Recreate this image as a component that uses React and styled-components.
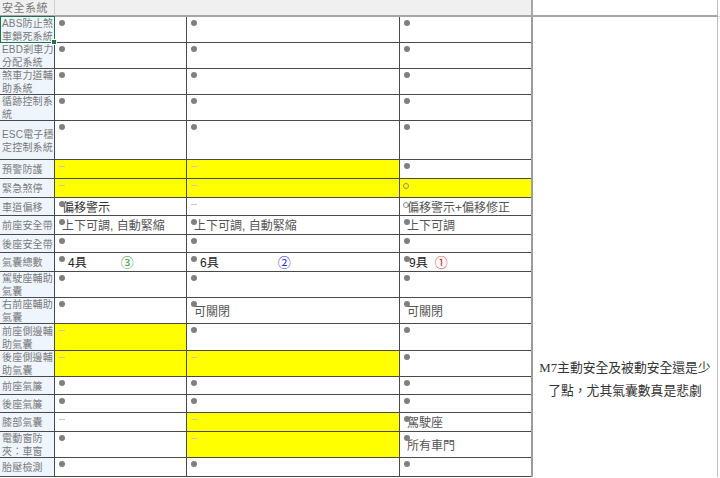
import React from "react";
import styled, { createGlobalStyle, css } from "styled-components";

const GlobalStyle = createGlobalStyle`
  html, body {
    margin: 0;
    padding: 0;
    background: #fff;
    overflow: hidden;
  }
  body {
    font-family: "Liberation Sans", "Noto Sans CJK TC", sans-serif;
  }
`;

const LINE = "#4a4a4a";
const HEAD_LINE = "#a6a6a6";

const dot = (t, o = {}) => ({ m: "dot", t, ...o });
const dash = (y) => ({ m: "dash", y });
const ring = (t, o = {}) => ({ m: "ring", t, ...o });

// 20 body rows, heights from the sheet
const rows = [
  { label: "ABS防止煞\n車鎖死系統", h: 26, selected: true, cells: [dot(), dot(), dot()] },
  { label: "EBD剎車力\n分配系統", h: 26, cells: [dot(), dot(), dot()] },
  { label: "煞車力道輔\n助系統", h: 26, cells: [dot(), dot(), dot()] },
  { label: "循跡控制系\n統", h: 26, cells: [dot(), dot(), dot()] },
  { label: "ESC電子穩\n定控制系統", h: 39, cells: [dot(), dot(), dot()] },
  { label: "預警防護", h: 19, cells: [dash(true), dash(true), dot()] },
  { label: "緊急煞停", h: 19, cells: [dash(true), dash(true), { ...ring(), y: true }] },
  {
    label: "車道偏移",
    h: 18,
    cells: [dot("偏移警示", { color: "#333" }), dash(false), ring("偏移警示+偏移修正")],
  },
  {
    label: "前座安全帶",
    h: 19,
    cells: [dot("上下可調, 自動緊縮"), dot("上下可調, 自動緊縮"), dot("上下可調")],
  },
  { label: "後座安全帶", h: 18, cells: [dot(), dot(), dot()] },
  {
    label: "氣囊總數",
    h: 19,
    cells: [
      dot("4具", { color: "#222", indent: 13, mark: "③", markColor: "#2f9a2f", gap: 34 }),
      dot("6具", { color: "#222", indent: 13, mark: "②", markColor: "#2424f0", gap: 59 }),
      dot("9具", { color: "#222", indent: 9, mark: "①", markColor: "#e02424", gap: 7 }),
    ],
  },
  { label: "駕駛座輔助\n氣囊", h: 26, cells: [dot(), dot(), dot()] },
  { label: "右前座輔助\n氣囊", h: 26, cells: [dot(), dot("可關閉"), dot("可關閉")] },
  { label: "前座側邊輔\n助氣囊", h: 27, cells: [dash(true), dot(), dot()] },
  { label: "後座側邊輔\n助氣囊", h: 26, cells: [dash(true), dash(true), dot()] },
  { label: "前座氣簾", h: 18, cells: [dot(), dot(), dot()] },
  { label: "後座氣簾", h: 18, cells: [dot(), dot(), dot()] },
  { label: "膝部氣囊", h: 19, cells: [dash(false), dash(true), dot("駕駛座")] },
  { label: "電動窗防\n夾：車窗", h: 26, cells: [dot(), dash(true), dot("所有車門")] },
  { label: "胎壓檢測", h: 19, cells: [dot(), dot(), dot()] },
];

const Sheet = styled.div`
  display: grid;
  grid-template-columns: 55px 132px 213px 131px 187px 1fr;
  grid-template-rows: 17px ${rows.map((r) => r.h + "px").join(" ")};
  width: 720px;
  box-sizing: border-box;
`;

const HeadLabel = styled.div`
  background: #f0f0f0;
  border-right: 1px solid #d0d0d0;
  border-bottom: 2px solid ${HEAD_LINE};
  color: #777;
  font-family: "Noto Sans CJK TC", sans-serif;
  font-size: 11px;
  letter-spacing: 0.5px;
  line-height: 15px;
  padding-left: 2px;
`;

const HeadBlank = styled.div`
  grid-column: 2 / 5;
  background: #f0f0f0;
  border-bottom: 2px solid ${HEAD_LINE};
`;

const HeadNote = styled.div`
  background: #fff;
  border-left: 2px solid ${HEAD_LINE};
  border-right: 1px solid #bdbdbd;
  border-bottom: 2px solid ${HEAD_LINE};
`;

const HeadRest = styled.div`
  border-bottom: 1px solid #e2e2e2;
`;

const Notes = styled.div`
  grid-column: 5;
  grid-row: 2 / span ${rows.length};
  border-left: 2px solid #9c9c9c;
  border-right: 1px solid #bdbdbd;
  padding-top: 340px;
  text-align: center;
  white-space: pre;
  color: #333;
  font-family: "Liberation Serif", "Noto Sans CJK TC", serif;
  font-size: 12.8px;
  line-height: 23px;
`;

const Rest = styled.div`
  grid-column: 6;
  grid-row: 2 / span ${rows.length};
`;

const Label = styled.div`
  position: relative;
  background: #eff5fc;
  border-right: 1px solid ${LINE};
  border-bottom: 1px solid ${LINE};
  color: #7a7a7a;
  font-family: "Liberation Sans", "Noto Sans CJK TC", sans-serif;
  font-size: 10px;
  letter-spacing: 0.2px;
  line-height: 13px;
  white-space: pre;
  padding: 1px 0 0 2px;
  display: flex;
  align-items: center;
  overflow: visible;

  ${(p) =>
    p.$selected &&
    css`
      z-index: 2;
      &::before {
        content: "";
        position: absolute;
        left: 0;
        top: -1px;
        right: -1px;
        bottom: -1px;
        border: 1px solid #217346;
      }
      &::after {
        content: "";
        position: absolute;
        right: -3px;
        bottom: -3px;
        width: 4px;
        height: 4px;
        background: #217346;
        border: 1px solid #fff;
      }
    `}
`;

const Cell = styled.div`
  position: relative;
  background: ${(p) => (p.$yellow ? "#ffff00" : "#fff")};
  border-right: ${(p) => (p.$last ? "none" : `1px solid ${LINE}`)};
  border-bottom: 1px solid ${LINE};
  display: flex;
  align-items: center;
  padding: 2px 0 0 ${(p) => p.$indent}px;
  color: ${(p) => p.$color};
  font-family: "Liberation Sans", "Noto Sans CJK TC", sans-serif;
  font-size: 12px;
  line-height: 16px;
  white-space: nowrap;
  overflow: hidden;
`;

const Dot = styled.span`
  position: absolute;
  left: 4px;
  top: 3px;
  width: 6px;
  height: 6px;
  border-radius: 50%;
  background: #7f7f7f;
`;

const Dash = styled.span`
  position: absolute;
  left: 4px;
  top: 6px;
  width: 6px;
  height: 1px;
  background: #c6c6c6;
`;

const Ring = styled.span`
  position: absolute;
  left: 3px;
  top: 4px;
  width: 6px;
  height: 6px;
  box-sizing: border-box;
  border-radius: 50%;
  border: 1px solid #8c8c8c;
`;

const Circled = styled.span`
  margin-left: ${(p) => p.$gap}px;
  color: ${(p) => p.$color};
  font-family: "DejaVu Serif", "Noto Sans CJK TC", serif;
  font-size: 13px;
`;

const Marker = ({ m }) => {
  if (m === "dot") return <Dot />;
  if (m === "ring") return <Ring />;
  return <Dash />;
};

const DataCell = ({ c, last }) => (
  <Cell $yellow={c.y} $last={last} $indent={c.indent ?? 7} $color={c.color || "#555"}>
    <Marker m={c.m} />
    {c.t && <span>{c.t}</span>}
    {c.mark && (
      <Circled $gap={c.gap} $color={c.markColor}>
        {c.mark}
      </Circled>
    )}
  </Cell>
);

export default function App() {
  return (
    <>
      <GlobalStyle />
      <Sheet>
        <HeadLabel>安全系統</HeadLabel>
        <HeadBlank />
        <HeadNote />
        <HeadRest />
        <Notes>{"M7主動安全及被動安全還是少\n了點，尤其氣囊數真是悲劇"}</Notes>
        <Rest />
        {rows.map((r, i) => (
          <React.Fragment key={i}>
            <Label $selected={r.selected}>{r.label}</Label>
            {r.cells.map((c, j) => (
              <DataCell key={j} c={c} last={j === 2} />
            ))}
          </React.Fragment>
        ))}
      </Sheet>
    </>
  );
}
